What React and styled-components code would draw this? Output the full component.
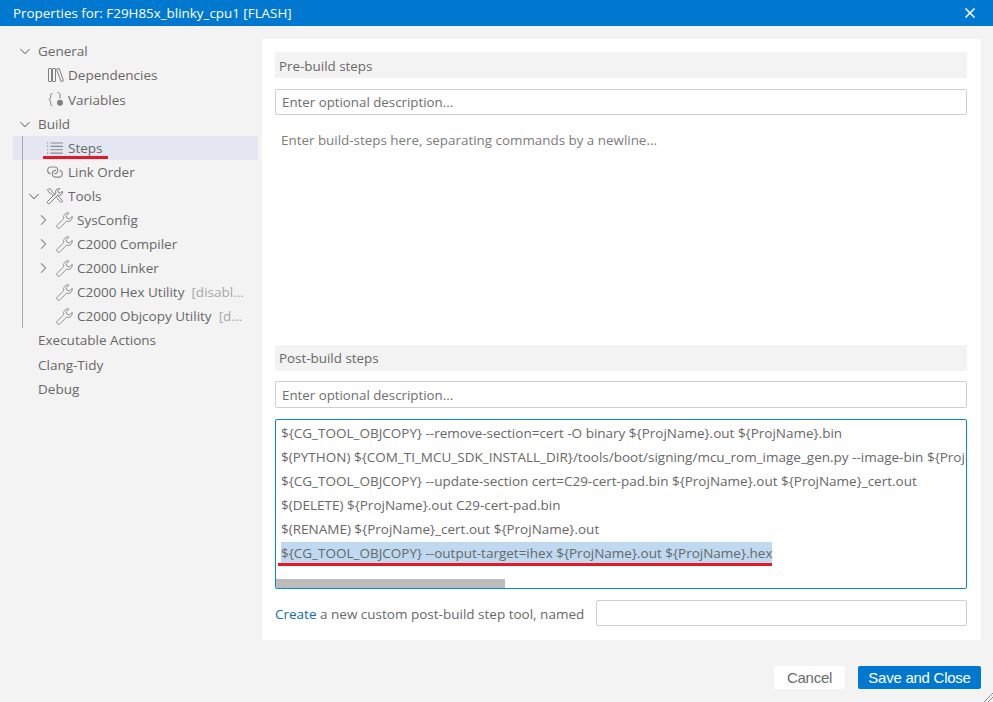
import React from "react";
import styled, { createGlobalStyle } from "styled-components";
import {
  VscChevronDown,
  VscChevronRight,
  VscChromeClose,
  VscListUnordered,
  VscLink,
} from "react-icons/vsc";

const GlobalStyle = createGlobalStyle`
  html, body {
    margin: 0;
    padding: 0;
    height: 702px;
    overflow: hidden;
    background: #f3f3f3;
    font-family: "Open Sans", "Noto Sans", sans-serif;
    font-size: 13.5px;
    color: #686868;
  }
  * { box-sizing: border-box; }
`;

const LibraryIcon = () => (
  <svg width="18" height="18" viewBox="0 0 18 18" fill="none" stroke="#808080" strokeWidth="1">
    <rect x="2.5" y="2.5" width="3" height="13" rx="0.5" />
    <rect x="6.5" y="2.5" width="3" height="13" rx="0.5" />
    <path d="M10.5 3.2 13 2.2 17.5 14.6 15 15.6Z" />
  </svg>
);

const VariableIcon = () => (
  <svg width="18" height="18" viewBox="0 0 18 18" fill="none" stroke="#808080" strokeWidth="1">
    <path d="M6.5 2.5c-1.800 0-1.800 1.200-1.800 2.600 0 1.900-.5 3-1.900 3.400 1.400.4 1.900 1.500 1.900 3.400 0 1.400 0 2.600 1.800 2.600" />
    <path d="M11.500 1.500c1.500 0 2.500.8 2.500 2.200v3.800" />
    <circle cx="14" cy="11.700" r="3" fill="#808080" stroke="none" />
  </svg>
);

const ToolsIcon = () => (
  <svg width="18" height="18" viewBox="0 0 18 18" fill="none" stroke="#808080" strokeWidth="1">
    <path d="M12.800 1.500a3.400 3.400 0 0 0-3 4.700L1.700 14.300a1.400 1.400 0 0 0 2 2l8.100-8.100a3.400 3.400 0 0 0 4.600-4.100l-2 2-2-.5-.5-2 2-2a3.400 3.400 0 0 0-.1 0z" />
    <path d="M1.500 3 3 1.500l2.500 1.500 .5 1.500 3 3-1.500 1.500-3-3-1.500-.5z" />
    <path d="M10.500 10.500l4 4.500a1.300 1.300 0 0 0 1.800-1.800l-4.300-4.200" />
  </svg>
);

const WrenchIcon = () => (
  <svg width="18" height="17" viewBox="0 0 18 17" fill="none" stroke="#8f8f8f" strokeWidth="1">
    <path d="M12.600 .8a4.200 4.200 0 0 0-3.700 5.700L2.200 13.200a1.600 1.600 0 0 0 0 2.300l.3.300a1.600 1.600 0 0 0 2.300 0l6.700-6.700a4.200 4.200 0 0 0 5.700-4.800l-2.600 2.600-2.600-.7-.7-2.600 2.600-2.600a4.200 4.200 0 0 0-1.300-.2z" />
  </svg>
);

const tree = [
  { label: "General", open: true },
  { label: "Dependencies", depth: 1, icon: <LibraryIcon />, spaced: true },
  { label: "Variables", depth: 1, icon: <VariableIcon /> },
  { label: "Build", open: true },
  { label: "Steps", depth: 1, icon: <VscListUnordered />, selected: true },
  { label: "Link Order", depth: 1, icon: <VscLink /> },
  { label: "Tools", depth: 1, icon: <ToolsIcon />, open: true },
  { label: "SysConfig", depth: 2, icon: <WrenchIcon />, closed: true },
  { label: "C2000 Compiler", depth: 2, icon: <WrenchIcon />, closed: true },
  { label: "C2000 Linker", depth: 2, icon: <WrenchIcon />, closed: true },
  { label: "C2000 Hex Utility", depth: 2, icon: <WrenchIcon />, note: "[disabl..." },
  { label: "C2000 Objcopy Utility", depth: 2, icon: <WrenchIcon />, note: "[d..." },
  { label: "Executable Actions", spaced: true },
  { label: "Clang-Tidy" },
  { label: "Debug" },
];

const commands = [
  "${CG_TOOL_OBJCOPY} --remove-section=cert -O binary ${ProjName}.out ${ProjName}.bin",
  "$(PYTHON) ${COM_TI_MCU_SDK_INSTALL_DIR}/tools/boot/signing/mcu_rom_image_gen.py --image-bin ${ProjName}.bin",
  "${CG_TOOL_OBJCOPY} --update-section cert=C29-cert-pad.bin ${ProjName}.out ${ProjName}_cert.out",
  "$(DELETE) ${ProjName}.out C29-cert-pad.bin",
  "$(RENAME) ${ProjName}_cert.out ${ProjName}.out",
];

export default function App() {
  return (
    <Dialog>
      <GlobalStyle />
      <TitleBar>
        <span>Properties for: F29H85x_blinky_cpu1 [FLASH]</span>
        <CloseIcon />
      </TitleBar>
      <Body>
        <Sidebar>
          {tree.map((item) => (
            <TreeRow key={item.label} $depth={item.depth || 0} $selected={item.selected} $spaced={item.spaced}>
              {item.open && <Chevron as={VscChevronDown} />}
              {item.closed && <Chevron as={VscChevronRight} />}
              {!item.open && !item.closed && <ChevronGap />}
              {item.icon && <TreeIcon>{item.icon}</TreeIcon>}
              <TreeLabel $marked={item.selected} $top={!item.depth}>{item.label}</TreeLabel>
              {item.note && <TreeNote>{item.note}</TreeNote>}
            </TreeRow>
          ))}
          <IndentGuide />
        </Sidebar>
        <Panel>
          <SectionTitle>Pre-build steps</SectionTitle>
          <TextField placeholder="Enter optional description..." />
          <EmptySteps>Enter build-steps here, separating commands by a newline...</EmptySteps>
          <SectionTitle $post>Post-build steps</SectionTitle>
          <TextField $post placeholder="Enter optional description..." />
          <StepsEditor>
            {commands.map((line) => (
              <StepLine key={line}>{line}</StepLine>
            ))}
            <StepLine>
              <Selected>{"${CG_TOOL_OBJCOPY} --output-target=ihex ${ProjName}.out ${ProjName}.hex"}</Selected>
            </StepLine>
            <ScrollThumb />
          </StepsEditor>
          <CreateRow>
            <CreateText>
              <CreateLink>Create</CreateLink> a new custom post-build step tool, named
            </CreateText>
            <NameField />
          </CreateRow>
        </Panel>
      </Body>
      <Footer>
        <CancelButton>Cancel</CancelButton>
        <SaveButton>Save and Close</SaveButton>
      </Footer>
      <Grip viewBox="0 0 10 10" width="10" height="10" stroke="#8a8a8a" strokeWidth="1">
        <path d="M1 10 10 1M5 10l5-5" />
      </Grip>
    </Dialog>
  );
}

const Dialog = styled.div`
  position: relative;
  width: 993px;
  height: 702px;
  display: flex;
  flex-direction: column;
  background: #f3f3f3;
`;

const TitleBar = styled.div`
  height: 26px;
  flex: none;
  background: #0078cf;
  color: #ffffff;
  font-size: 13.4px;
  padding: 0 13px;
  display: flex;
  align-items: center;
  justify-content: space-between;
`;

const CloseIcon = styled(VscChromeClose)`
  font-size: 14px;
  margin-right: 3px;
  stroke: #ffffff;
  stroke-width: 0.6;
`;

const Body = styled.div`
  height: 614px;
  flex: none;
  display: flex;
  padding-top: 13px;
`;

const Sidebar = styled.nav`
  position: relative;
  width: 262px;
  flex: none;
  padding-left: 13px;
  padding-right: 4px;
`;

const IndentGuide = styled.div`
  position: absolute;
  left: 22px;
  top: 97px;
  width: 1px;
  height: 192px;
  background: #a9a9a9;
`;

const TreeRow = styled.div`
  height: 24px;
  margin-bottom: ${(p) => (p.$spaced ? 1 : 0)}px;
  display: flex;
  align-items: center;
  white-space: nowrap;
  padding-left: ${(p) => 4 + p.$depth * 9}px;
  background: ${(p) => (p.$selected ? "#e4e6f1" : "transparent")};
`;

const Chevron = styled.svg`
  width: 16px;
  height: 16px;
  flex: none;
  margin-right: 4px;
  color: #707070;
`;

const ChevronGap = styled.span`
  width: 20px;
  flex: none;
`;

const TreeIcon = styled.span`
  width: 22px;
  height: 19px;
  flex: none;
  display: flex;
  align-items: center;
  font-size: 18px;
  color: #8a8a8a;
`;

const TreeLabel = styled.span`
  position: relative;
  margin-left: ${(p) => (p.$top ? 1 : 0)}px;
  ${(p) =>
    p.$marked &&
    `&::after {
      content: "";
      position: absolute;
      left: -25px;
      right: -5px;
      bottom: -2px;
      height: 3px;
      background: #e01b24;
    }`}
`;

const TreeNote = styled.span`
  margin-left: 7px;
  color: #a8a8a8;
`;

const Panel = styled.main`
  width: 719px;
  flex: none;
  background: #ffffff;
  padding: 13px 14px 14px 13px;
  display: flex;
  flex-direction: column;
`;

const SectionTitle = styled.div`
  height: 26px;
  flex: none;
  background: #f3f3f3;
  display: flex;
  align-items: center;
  padding: ${(p) => (p.$post ? 0 : 1)}px 0 0 4px;
  font-size: 13.4px;
`;

const TextField = styled.input`
  height: ${(p) => (p.$post ? 27 : 26)}px;
  flex: none;
  margin-top: ${(p) => (p.$post ? 10 : 11)}px;
  padding: 0 6px;
  border: 1px solid #cecece;
  border-radius: 2px;
  background: #ffffff;
  font: inherit;
  font-size: 13.3px;
  color: #6e6e6e;
  outline: none;
  &::placeholder {
    color: #6e6e6e;
    opacity: 1;
  }
`;

const EmptySteps = styled.div`
  height: 230px;
  flex: none;
  padding: 16px 6px 0;
  font-size: 13.4px;
  color: #7c7c7c;
`;

const StepsEditor = styled.div`
  position: relative;
  height: 170px;
  flex: none;
  margin-top: 11px;
  padding: 1px 0 0 5px;
  border: 1px solid #0a85d9;
  border-radius: 2px;
  overflow: hidden;
`;

const StepLine = styled.div`
  height: 24px;
  line-height: 24px;
  white-space: nowrap;
`;

const Selected = styled.span`
  position: relative;
  display: inline-block;
  height: 22px;
  line-height: 22px;
  vertical-align: top;
  margin-top: 1px;
  background: #bfd9f0;
  &::after {
    content: "";
    position: absolute;
    left: -3px;
    right: 0;
    bottom: -2px;
    height: 3px;
    background: #e01b24;
  }
`;

const ScrollThumb = styled.div`
  position: absolute;
  left: 0;
  bottom: 0;
  width: 229px;
  height: 9px;
  background: #bcbcbc;
`;

const CreateRow = styled.div`
  display: flex;
  align-items: center;
  gap: 12px;
  margin-top: 11px;
`;

const CreateText = styled.span`
  padding-top: 2px;
`;

const CreateLink = styled.a`
  color: #0f6cb0;
`;

const NameField = styled.input`
  flex: 1;
  height: 26px;
  min-width: 0;
  border: 1px solid #cecece;
  border-radius: 2px;
  outline: none;
`;

const Footer = styled.footer`
  flex: 1;
  display: flex;
  justify-content: flex-end;
  align-items: flex-start;
  gap: 13px;
  padding: 26px 12px 0 0;
`;

const CancelButton = styled.button`
  width: 71px;
  height: 23px;
  border: none;
  border-radius: 2px;
  background: #ffffff;
  color: #6b6b6b;
  font-family: "Liberation Sans", Arial, sans-serif;
  font-size: 15px;
  letter-spacing: -0.25px;
  padding: 0;
`;

const SaveButton = styled(CancelButton)`
  width: 123px;
  background: #0078cf;
  color: #ffffff;
`;

const Grip = styled.svg`
  position: absolute;
  right: 0;
  bottom: 0;
`;
